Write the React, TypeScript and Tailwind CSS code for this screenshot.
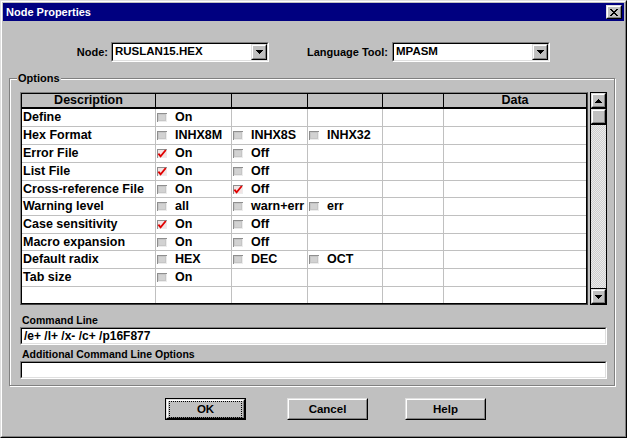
import React from "react";

type Opt = { label: string; checked?: boolean };
type Row = { desc: string; opts: Opt[] };

const rows: Row[] = [
  { desc: "Define", opts: [{ label: "On" }] },
  { desc: "Hex Format", opts: [{ label: "INHX8M" }, { label: "INHX8S" }, { label: "INHX32" }] },
  { desc: "Error File", opts: [{ label: "On", checked: true }, { label: "Off" }] },
  { desc: "List File", opts: [{ label: "On", checked: true }, { label: "Off" }] },
  { desc: "Cross-reference File", opts: [{ label: "On" }, { label: "Off", checked: true }] },
  { desc: "Warning level", opts: [{ label: "all" }, { label: "warn+err" }, { label: "err" }] },
  { desc: "Case sensitivity", opts: [{ label: "On", checked: true }, { label: "Off" }] },
  { desc: "Macro expansion", opts: [{ label: "On" }, { label: "Off" }] },
  { desc: "Default radix", opts: [{ label: "HEX" }, { label: "DEC" }, { label: "OCT" }] },
  { desc: "Tab size", opts: [{ label: "On" }] },
  { desc: "", opts: [] },
];

// row heights incl. the 1px grid line; the last one takes what is left
const rowHeights = [
  "h-[18px]",
  "h-[18px]",
  "h-[18px]",
  "h-[18px]",
  "h-[17px]",
  "h-[18px]",
  "h-[18px]",
  "h-[17px]",
  "h-[18px]",
  "h-[18px]",
  "flex-1",
];

const colW = ["w-[134px]", "w-[76px]", "w-[76px]", "w-[75px]", "w-[61px]", "w-[142px]"];

function Raised({ className = "", children }: { className?: string; children?: React.ReactNode }) {
  return (
    <div className={`border border-t-[#dfdfdf] border-l-[#dfdfdf] border-r-black border-b-black ${className}`}>
      <div className="flex h-full w-full items-center justify-center border border-t-white border-l-white border-r-[#808080] border-b-[#808080] bg-[#c0c0c0]">
        {children}
      </div>
    </div>
  );
}

function Sunken({ className = "", children }: { className?: string; children?: React.ReactNode }) {
  return (
    <div className={`border border-t-[#808080] border-l-[#808080] border-r-white border-b-white ${className}`}>
      <div className="flex h-full w-full items-center border border-t-black border-l-black border-r-[#dfdfdf] border-b-[#dfdfdf] bg-white">
        {children}
      </div>
    </div>
  );
}

function ArrowDown() {
  return (
    <svg width="7" height="4" viewBox="0 0 7 4" shapeRendering="crispEdges">
      <path d="M0 0h7v1H0zM1 1h5v1H1zM2 2h3v1H2zM3 3h1v1H3z" fill="black" />
    </svg>
  );
}

function ArrowUp() {
  return (
    <svg width="7" height="4" viewBox="0 0 7 4" shapeRendering="crispEdges">
      <path d="M3 0h1v1H3zM2 1h3v1H2zM1 2h5v1H1zM0 3h7v1H0z" fill="black" />
    </svg>
  );
}

function CheckBox({ on }: { on?: boolean }) {
  return (
    <svg width="10" height="9" viewBox="0 0 10 9" className="shrink-0" shapeRendering="crispEdges">
      <rect x="0" y="0" width="10" height="9" fill="#8e8e8e" />
      <rect x="1" y="1" width="9" height="8" fill="#ececec" />
      <rect x="1" y="1" width="8" height="7" fill={on ? "#f2e4e4" : "#c6c6c6"} />
      {on ? null : <rect x="2" y="2" width="6" height="5" fill="#d2d2d2" />}
      {on ? (
        <path
          d="M1.4 4.6 L3.6 7.4 L8.8 1"
          stroke="#e00000"
          strokeWidth="1.8"
          fill="none"
          shapeRendering="auto"
        />
      ) : null}
    </svg>
  );
}

function Combo({ value, className = "" }: { value: string; className?: string }) {
  return (
    <Sunken className={`h-[20px] w-[158px] ${className}`}>
      <span className="flex-1 pl-[2px] text-[11.5px] font-bold leading-none">{value}</span>
      <Raised className="h-[16px] w-[16px]">
        <ArrowDown />
      </Raised>
    </Sunken>
  );
}

function OptionsGrid() {
  return (
    <div className="flex h-[213px] w-[568px] flex-col border border-t-[#808080] border-l-[#808080] border-r-[#404040] border-b-[#404040]">
      <div className="flex h-full flex-col border border-black bg-white">
        <div className="flex h-[15px] border-b-2 border-black bg-[#c0c0c0] text-[12.5px] font-bold leading-none">
          {colW.map((w, i) => (
            <div
              key={i}
              className={`${w} flex items-center justify-center ${i < 5 ? "border-r border-black" : ""}`}
            >
              {i === 0 ? "Description" : i === 5 ? "Data" : ""}
            </div>
          ))}
        </div>
        {rows.map((r, ri) => (
          <div
            key={ri}
            className={`flex ${rowHeights[ri]} ${ri < 10 ? "border-b border-[#c0c0c0]" : ""} text-[12.5px] font-bold leading-none`}
          >
            {colW.map((w, ci) => {
              const opt = ci >= 1 && ci <= 3 ? r.opts[ci - 1] : undefined;
              return (
                <div
                  key={ci}
                  className={`${w} flex items-center overflow-hidden whitespace-nowrap pl-[1px] ${ci < 5 ? "border-r border-[#c0c0c0]" : ""}`}
                >
                  {ci === 0 ? r.desc : null}
                  {opt ? (
                    <>
                      <CheckBox on={opt.checked} />
                      <span className="ml-[8px]">{opt.label}</span>
                    </>
                  ) : null}
                </div>
              );
            })}
          </div>
        ))}
      </div>
    </div>
  );
}

function ScrollBar() {
  return (
    <div className="ml-[2px] flex h-[213px] w-[17px] flex-col border border-black">
      <div className="h-[16px] border-b border-black">
        <Raised className="h-full w-full">
          <ArrowUp />
        </Raised>
      </div>
      <div className="h-[16px] border-b border-black">
        <Raised className="h-full w-full" />
      </div>
      <div className="flex-1 bg-[image:repeating-conic-gradient(#cfcfcf_0_25%,#ebebeb_0_50%)] bg-[length:2px_2px]" />
      <div className="h-[16px] border-t border-black">
        <Raised className="h-full w-full">
          <ArrowDown />
        </Raised>
      </div>
    </div>
  );
}

function DlgButton({ label, isDefault, className = "" }: { label: string; isDefault?: boolean; className?: string }) {
  const inner = (
    <Raised className="h-full w-full">
      <span
        className={`px-[4px] text-[11.5px] font-bold leading-[13px] ${isDefault ? "outline outline-1 outline-dotted outline-black outline-offset-[1px] px-[26px]" : ""}`}
      >
        {label}
      </span>
    </Raised>
  );
  return isDefault ? (
    <div className={`h-[22px] w-[81px] border border-black ${className}`}>{inner}</div>
  ) : (
    <div className={`h-[22px] w-[81px] ${className}`}>{inner}</div>
  );
}

export default function App() {
  return (
    <div className="h-[438px] w-[627px] overflow-hidden bg-[#c0c0c0] font-['Liberation_Sans',Arial,sans-serif] text-black">
      <div className="h-full border border-t-[#dfdfdf] border-l-[#dfdfdf] border-r-black border-b-black">
        <div className="flex h-full flex-col border border-t-white border-l-white border-r-[#808080] border-b-[#808080] p-px">
          {/* title bar */}
          <div className="flex h-[18px] shrink-0 items-center justify-between bg-[#000080] pl-[3px] pr-[2px]">
            <span className="text-[11px] font-bold leading-none text-white">Node Properties</span>
            <Raised className="h-[14px] w-[16px]">
              <svg width="8" height="7" viewBox="0 0 8 7" shapeRendering="crispEdges">
                <path
                  d="M0 0h2v1H0zM6 0h2v1H6zM1 1h2v1H1zM5 1h2v1H5zM2 2h4v1H2zM3 3h2v1H3zM2 4h4v1H2zM1 5h2v1H1zM5 5h2v1H5zM0 6h2v1H0zM6 6h2v1H6z"
                  fill="black"
                />
              </svg>
            </Raised>
          </div>

          <div className="px-[6px]">
            {/* node / language tool */}
            <div className="mt-[21px] flex h-[20px] items-center">
              <span className="w-[99px] text-right text-[11px] font-bold leading-none">Node:</span>
              <Combo value="RUSLAN15.HEX" className="ml-[3px]" />
              <span className="w-[119px] text-right text-[11px] font-bold leading-none">Language Tool:</span>
              <Combo value="MPASM" className="ml-[4px]" />
            </div>

            {/* options group */}
            <fieldset className="mt-[9px] w-[606px] border border-[#808080] pb-[6px] pl-[10px] pr-[7px] shadow-[inset_1px_1px_0_#fff,1px_1px_0_#fff]">
              <legend className="-ml-[3px] bg-[#c0c0c0] px-[1px] text-[11px] font-bold leading-[14px]">Options</legend>
              <div className="mt-[7px] flex">
                <OptionsGrid />
                <ScrollBar />
              </div>

              <div className="mt-[8px] pl-[2px] text-[10.5px] font-bold leading-[14px]">Command Line</div>
              <Sunken className="h-[18px] w-[587px]">
                <span className="pl-[2px] text-[12px] font-bold leading-none">/e+ /l+ /x- /c+ /p16F877</span>
              </Sunken>
              <div className="mt-[2px] pl-[2px] text-[10.5px] font-bold leading-[14px]">Additional Command Line Options</div>
              <Sunken className="h-[18px] w-[587px]" />
            </fieldset>

            {/* buttons */}
            <div className="mt-[12px] flex">
              <DlgButton label="OK" isDefault className="ml-[156px]" />
              <DlgButton label="Cancel" className="ml-[41px]" />
              <DlgButton label="Help" className="ml-[37px]" />
            </div>
          </div>
        </div>
      </div>
    </div>
  );
}
